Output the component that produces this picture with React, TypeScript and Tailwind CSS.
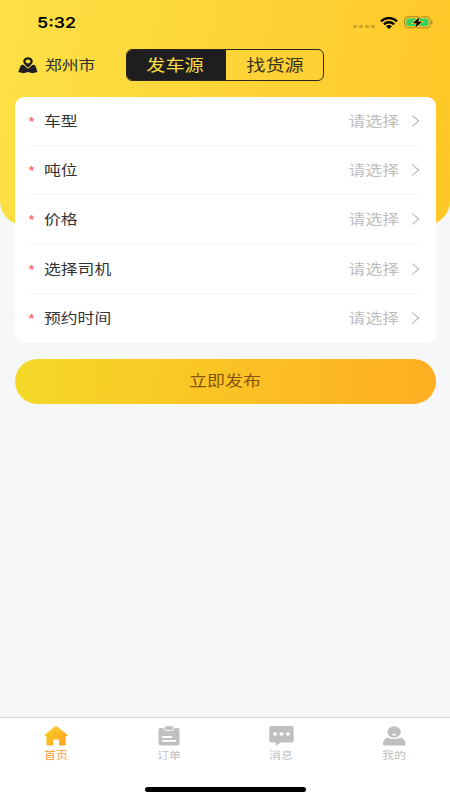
import clsx from "clsx";
import type { ReactNode } from "react";

const fields = ["车型", "吨位", "价格", "选择司机", "预约时间"];

const StatusBar = () => (
  <div className="flex h-[45px] items-center justify-between pl-[37px] pr-[17px]">
    <span className="origin-left scale-x-[1.18] font-['Inter'] text-[15px] font-semibold leading-none text-black">
      5:32
    </span>
    <div className="flex items-center">
      <div className="mr-[5px] mt-[8px] flex gap-[2px]">
        {[0, 1, 2, 3].map((dot) => (
          <i key={dot} className="h-[3px] w-[4px] rounded-[1px] bg-[#cda12a]" />
        ))}
      </div>
      <svg width="18" height="12" viewBox="0 0 19 12" preserveAspectRatio="none" className="mr-[6px]">
        <g fill="none" stroke="#000" strokeWidth="2.3">
          <path d="M1 4.3C5.6-.1 13.4-.1 18 4.3" />
          <path d="M4 7.4C7.1 4.5 11.9 4.5 15 7.4" />
        </g>
        <path d="M6.4 9.2c1.7-1.5 4.5-1.5 6.2 0l-3.1 2.7z" />
      </svg>
      <svg width="29" height="13" viewBox="0 0 29 13">
        <rect x=".6" y=".8" width="25.6" height="11" rx="3" fill="none" stroke="#a68320" />
        <rect x="2.4" y="2.6" width="22" height="7.4" rx="1.4" fill="#32cf63" />
        <path d="M27.2 4.3c2 .7 2 3.3 0 4z" fill="#a68320" />
        <path
          d="M15.8 1 8.7 7.2h4l-1.6 4.6 7.1-6.1h-4z"
          fill="#000"
          stroke="#fdcc30"
          strokeWidth="1.6"
          paintOrder="stroke"
        />
      </svg>
    </div>
  </div>
);

const LocationIcon = () => (
  <svg width="20" height="17" viewBox="0 0 20 17" fill="#202020">
    <path d="M2.3 9.4Q2.8 8 4.2 7.8l1.4.2 4.4 3.8L14.4 8l1.4-.2q1.4.2 1.9 1.6l1.8 5.6-5.2 1.3-4.4-1.4-4.4 1.4L.3 15z" />
    <path
      fillRule="evenodd"
      d="M10 .2c2.8 0 4.8 1.7 4.8 4 0 2.3-2.5 4.4-4.8 6.4-2.3-2-4.8-4.1-4.8-6.4 0-2.3 2-4 4.8-4Zm0 2.3c-1.5 0-2.4.8-2.4 1.9S8.5 6.3 10 6.3s2.4-.8 2.4-1.9-.9-1.9-2.4-1.9Z"
    />
  </svg>
);

const HomeIcon = () => (
  <svg width="24" height="20" viewBox="0 0 24 20">
    <defs>
      <linearGradient id="home" x1="0" y1="0" x2="1" y2="1">
        <stop stopColor="#f6d529" />
        <stop offset="1" stopColor="#ff9d22" />
      </linearGradient>
    </defs>
    <path
      fill="url(#home)"
      d="M11 .6q1-.8 2 0l10 7.8c1 .8.4 1.8-.7 1.8h-.6v7.7c0 1-.6 1.6-1.6 1.6h-5v-4.7c0-.9-.5-1.3-1.4-1.3h-3c-.9 0-1.4.4-1.4 1.3v4.7H4c-1 0-1.6-.6-1.6-1.6v-7.7h-.7C.6 10.2 0 9.2 1 8.4z"
    />
  </svg>
);

const OrderIcon = () => (
  <svg width="24" height="20" viewBox="0 0 24 20">
    <rect x="1.5" y="2" width="21" height="17.4" rx="2" fill="#bfbfbf" />
    <rect x="7" y="-.3" width="10" height="4.8" rx="2.4" fill="#bfbfbf" stroke="#fff" />
    <path d="M5.6 11h8.8M5.6 14.8h13" stroke="#fff" strokeWidth="1.8" strokeLinecap="round" />
  </svg>
);

const MessageIcon = () => (
  <svg width="25" height="20" viewBox="0 0 25 20">
    <path
      fill="#bfbfbf"
      d="M2.3 0h20.4q2 0 2 1.8v12.8q0 1.8-2 1.8H12l-5.2 3.4v-3.4H2.3q-2 0-2-1.8V1.8Q.3 0 2.3 0Z"
    />
    <g fill="#fff">
      <ellipse cx="6" cy="8" rx="2" ry="1.8" />
      <ellipse cx="12.5" cy="8" rx="2" ry="1.8" />
      <ellipse cx="19" cy="8" rx="2" ry="1.8" />
    </g>
  </svg>
);

const MineIcon = () => (
  <svg width="24" height="20" viewBox="0 0 24 20">
    <ellipse cx="12.2" cy="6" rx="6.7" ry="5.8" fill="#bfbfbf" />
    <path d="M10 8h4.4c-.2 2-4.2 2-4.4 0Z" fill="#fff" />
    <path
      fill="#bfbfbf"
      d="M5.8 11.4c3.4 2 9.4 2 12.8 0 3 .9 4.7 3.2 5 6.3.1 1-.5 1.8-1.5 1.8H2.3c-1 0-1.6-.8-1.5-1.8.3-3.1 2-5.4 5-6.3Z"
    />
  </svg>
);

const tabs: { label: string; icon: ReactNode; active?: boolean }[] = [
  { label: "首页", icon: <HomeIcon />, active: true },
  { label: "订单", icon: <OrderIcon /> },
  { label: "消息", icon: <MessageIcon /> },
  { label: "我的", icon: <MineIcon /> },
];

const App = () => {
  return (
    <div className="flex h-[800px] w-[450px] flex-col overflow-hidden bg-[#f5f7f9] font-['Liberation_Sans','Noto_Sans_CJK_SC',sans-serif]">
      <header className="h-[225px] shrink-0 rounded-b-[24px] bg-linear-100 from-[#fce145] to-[#ffc727]">
        <StatusBar />
        <div className="mt-1 flex h-8 items-center pl-[18px]">
          <LocationIcon />
          <span className="ml-[7px] w-[81px]">
            <span className="inline-block origin-left scale-x-120 text-sm text-[#303030]">
              郑州市
            </span>
          </span>
          <div className="flex h-8 w-[198px] overflow-hidden rounded-[6px] border border-[#2b2820] text-base">
            <button className="w-[99px] bg-[#1e1e1e] pr-[2px] pt-[2px] text-[#fbdc42]">
              <span className="inline-block scale-x-120">发车源</span>
            </button>
            <button className="flex-1 pl-px pt-[2px] text-[#39331f]">
              <span className="inline-block scale-x-120">找货源</span>
            </button>
          </div>
        </div>
      </header>

      <main className="-mt-32 flex-1 px-[14.5px]">
        <ul className="rounded-[9px] bg-white px-[14.5px]">
          {fields.map((field) => (
            <li
              key={field}
              className="flex h-[49.2px] items-center border-b border-[#f5f5f5] text-sm last:border-0"
            >
              <span className="mt-px w-[15px] text-[13px] font-bold leading-none text-[#ff6b70]">
                *
              </span>
              <span className="origin-left scale-x-120 text-[#333]">{field}</span>
              <span className="ml-auto origin-right scale-x-120 text-[#bdbdbd]">请选择</span>
              <svg
                width="9"
                height="12"
                viewBox="0 0 9 12"
                fill="none"
                stroke="#b8b8b8"
                strokeWidth="1.1"
                className="ml-3 mr-[1.5px]"
              >
                <path d="M1.3.6 7.7 6l-6.4 5.4" />
              </svg>
            </li>
          ))}
        </ul>
        <button className="mt-4 h-[45px] w-full rounded-full bg-linear-100 from-[#f4d927] to-[#ffad22] text-[15px] text-[#85550e]">
          <span className="inline-block scale-x-120">立即发布</span>
        </button>
      </main>

      <footer className="flex h-[83px] shrink-0 flex-col border-t border-[#d9d9d9] bg-white">
        <nav className="grid grid-cols-4 pt-2">
          {tabs.map((tab) => (
            <a key={tab.label} className="flex flex-col items-center">
              {tab.icon}
              <span
                className={clsx(
                  "mt-[3px] scale-x-120 text-[10px] leading-[14px]",
                  tab.active ? "text-[#ffa032]" : "text-[#bfbfbf]",
                )}
              >
                {tab.label}
              </span>
            </a>
          ))}
        </nav>
        <div className="mx-auto mb-2 mt-auto h-[5px] w-[161px] rounded-full bg-black" />
      </footer>
    </div>
  );
};

export default App;
